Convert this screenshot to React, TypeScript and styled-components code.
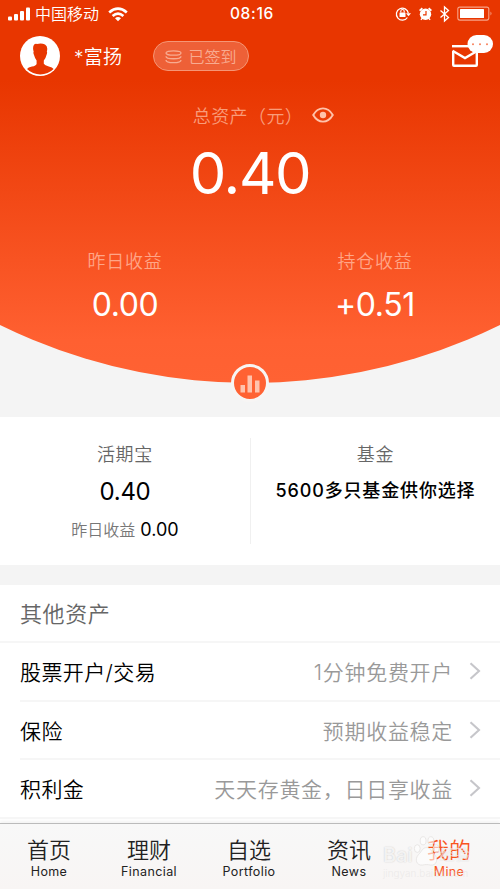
import React from "react";
import styled, { createGlobalStyle } from "styled-components";

const GlobalStyle = createGlobalStyle`
  * { box-sizing: border-box; }
  body {
    margin: 0;
    background: #f4f4f4;
    font-family: Inter, "Noto Sans CJK SC", sans-serif;
    font-weight: 350;
    overflow: hidden;
  }
`;

const Screen = styled.div`
  width: 500px;
  height: 889px;
  display: flex;
  flex-direction: column;
  background: #f4f4f4;
  overflow: hidden;
`;

const Hero = styled.header`
  position: relative;
  flex: none;
  height: 417px;
`;

const HeroBody = styled.div`
  height: 384px;
  color: #fff;
  background: linear-gradient(#e83600 0, #e83600 80px, #ff6031 340px, #ff6233 384px);
  clip-path: circle(568px at 50% -185px);
`;

const StatusBar = styled.div`
  height: 28px;
  display: grid;
  grid-template-columns: 1fr auto 1fr;
  align-items: center;
  padding: 0 7px 0 8px;
`;

const StatusGroup = styled.div<{ $end?: boolean }>`
  display: flex;
  align-items: center;
  justify-content: ${(p) => (p.$end ? "flex-end" : "flex-start")};
`;

const Carrier = styled.span`
  margin: 0 9px 0 5px;
  font-size: 16px;
  line-height: 20px;
`;

const Clock = styled.span`
  padding: 0 0 1px 3px;
  font-size: 15.5px;
  font-weight: 500;
  letter-spacing: 0.7px;
`;

const ProfileBar = styled.div`
  height: 56px;
  display: flex;
  align-items: center;
  padding: 0 7px 0 20px;
`;

const UserName = styled.span`
  width: 79px;
  margin-left: 14px;
  padding-top: 3px;
  font-size: 19px;
  line-height: 24px;
  letter-spacing: 0.2px;
`;

const SignedPill = styled.div`
  width: 96px;
  height: 30px;
  display: flex;
  align-items: center;
  justify-content: center;
  gap: 6px;
  padding-top: 1px;
  border: 1.5px solid #f59675;
  border-radius: 15px;
  background: #ee6037;
  color: #f8ab91;
  font-size: 16px;
  line-height: 20px;
`;

const MailIcon = styled.svg`
  margin: -10px 0 0 auto;
`;

const Total = styled.section`
  height: 150px;
  display: flex;
  flex-direction: column;
  align-items: center;
`;

const TotalLabel = styled.div`
  height: 24px;
  margin-top: 19px;
  display: flex;
  align-items: center;
  gap: 9px;
  padding-left: 27px;
  color: #f99c7a;
  font-size: 18px;
  letter-spacing: 0.4px;
`;

const TotalValue = styled.div`
  margin-top: 15px;
  font-size: 58px;
  font-weight: 400;
  line-height: 62px;
  letter-spacing: -1.3px;
`;

const Gains = styled.section`
  display: grid;
  grid-template-columns: 1fr 1fr;
`;

const Gain = styled.div`
  display: flex;
  flex-direction: column;
  align-items: center;
`;

const GainLabel = styled.div`
  margin-top: 16px;
  height: 24px;
  color: #ffa587;
  font-size: 18px;
  line-height: 24px;
  letter-spacing: 0.75px;
`;

const GainValue = styled.div`
  margin-top: 12px;
  font-size: 32px;
  font-weight: 400;
  line-height: 38px;
  letter-spacing: -0.4px;
`;

const ChartBadge = styled.div`
  position: absolute;
  left: 231px;
  top: 364px;
  width: 38px;
  height: 38px;
  display: grid;
  place-items: center;
  padding-top: 2px;
  border: 3px solid #f7f5f4;
  border-radius: 50%;
  background: #ff6233;
`;

const Products = styled.section`
  flex: none;
  height: 148px;
  display: grid;
  grid-template-columns: 1fr 1fr;
  align-items: center;
  background: #fff;
`;

const Product = styled.div<{ $divided?: boolean }>`
  height: 106px;
  display: flex;
  flex-direction: column;
  align-items: center;
  border-left: ${(p) => (p.$divided ? "1px solid #f0f0f0" : "0")};
`;

const ProductName = styled.div`
  margin-top: 5px;
  color: #666;
  font-size: 18px;
  line-height: 24px;
  letter-spacing: 0.75px;
`;

const ProductValue = styled.div`
  margin-top: 10px;
  color: #000;
  font-size: 24px;
  font-weight: 400;
  line-height: 30px;
  letter-spacing: -0.3px;
`;

const ProductSlogan = styled.div`
  margin-top: 12px;
  color: #000;
  font-size: 18px;
  font-weight: 500;
  line-height: 24px;
  letter-spacing: 0.85px;
`;

const ProductNote = styled.div`
  margin-top: 12px;
  color: #000;
  font-size: 18px;
  font-weight: 400;
  line-height: 22px;
`;

const NoteLabel = styled.span`
  margin-right: 5px;
  color: #777;
  font-size: 16px;
  font-weight: 350;
`;

const Assets = styled.section`
  flex: 1;
  margin-top: 20px;
  background: #fff;
`;

const AssetsTitle = styled.h2`
  margin: 0;
  height: 58px;
  padding-left: 20px;
  border-bottom: 2px solid #f6f6f6;
  color: #666;
  font-size: 22px;
  font-weight: 350;
  line-height: 59px;
  letter-spacing: 0.6px;
`;

const AssetRow = styled.div<{ $last?: boolean }>`
  height: 58.6px;
  margin-left: ${(p) => (p.$last ? "0" : "20px")};
  padding: 0 19px 0 ${(p) => (p.$last ? "20px" : "0")};
  display: flex;
  align-items: center;
  border-bottom: 2px solid #f6f6f6;
`;

const AssetName = styled.span`
  flex: 1;
  color: #000;
  font-size: 21px;
  letter-spacing: 0.4px;
`;

const AssetHint = styled.span`
  margin-right: 16px;
  color: #999;
  font-size: 21px;
  letter-spacing: 0.7px;
`;

const TabBar = styled.nav`
  position: relative;
  flex: none;
  height: 66px;
  display: grid;
  grid-template-columns: repeat(5, 1fr);
  border-top: 1px solid #bbb;
  background: linear-gradient(#f8f8f8, #f8f5f4);
  box-shadow: 0 -2px 3px rgba(0, 0, 0, 0.05);
`;

const Tab = styled.div<{ $active?: boolean }>`
  display: flex;
  flex-direction: column;
  align-items: center;
  padding-right: 2px;
  color: ${(p) => (p.$active ? "#f8551f" : "#222")};
`;

const TabTitle = styled.span`
  margin-top: 11px;
  font-size: 22px;
  line-height: 30px;
`;

const TabSub = styled.span`
  font-size: 12.5px;
  font-weight: 400;
  line-height: 14px;
  letter-spacing: 0.4px;
`;

const Watermark = styled.div`
  position: absolute;
  left: 383px;
  top: 11px;
  width: 92px;
`;

const WatermarkRow = styled.div`
  display: flex;
  align-items: flex-end;
  height: 32px;
  color: rgba(255, 255, 255, 0.75);
  text-shadow: 0 0 1.5px rgba(0, 0, 0, 0.2);
  font-size: 20px;
  font-weight: 500;
  line-height: 24px;
  white-space: nowrap;
`;

const WatermarkSuffix = styled.span`
  font-size: 15px;
  color: rgba(255, 255, 255, 0.6);
  text-shadow: 0 0 1px rgba(0, 0, 0, 0.12);
`;

const WatermarkUrl = styled.div`
  font-size: 10px;
  line-height: 13px;
  color: rgba(225, 222, 221, 0.5);
  white-space: nowrap;
`;

const Signal = () => (
  <svg width="22" height="14" viewBox="0 0 22 14" fill="#fff">
    <rect x="0" y="9.5" width="4" height="4" rx="1" />
    <rect x="6" y="7" width="4" height="6.5" rx="1" />
    <rect x="12" y="4" width="4" height="9.5" rx="1" />
    <rect x="18" y="0.5" width="4" height="13" rx="1" />
  </svg>
);

const Wifi = () => (
  <svg width="20" height="15" viewBox="0 0 20 15" fill="none" stroke="#fff" strokeWidth="2.7">
    <path d="M1.2 5.4Q10-2.2 18.8 5.4" />
    <path d="M4.6 9Q10 4.4 15.4 9" />
    <path d="M7 11.2Q10 8.8 13 11.2L10 14.3Z" fill="#fff" stroke="none" />
  </svg>
);

const StatusIcons = () => (
  <svg width="98" height="18" viewBox="0 0 98 18" fill="none" stroke="#fff">
    <path d="M12.4 12.5A6 6 0 1 1 13.3 8.2" strokeWidth="1.3" />
    <path d="M11 8.3h5l-2.5 3z" fill="#fff" stroke="none" />
    <rect x="4.5" y="7.4" width="6" height="4.6" rx=".6" fill="#fff" stroke="none" />
    <path d="M5.8 7.5V6.2a1.7 1.7 0 0 1 3.4 0v1.3" strokeWidth="1.1" />
    <circle cx="30.5" cy="9.3" r="5.7" fill="#fff" stroke="none" />
    <path d="M24.6 5.6l2.8-2.4M36.4 5.6l-2.8-2.4" strokeWidth="1.8" />
    <path d="M27 13.5l-1.1 1.3M34 13.5l1.1 1.3" strokeWidth="1.3" />
    <path d="M31 5.9v4h-3" stroke="#e83600" strokeWidth="1.2" />
    <path d="M45.5 5.4l8 7.2-4 3.4V2l4 3.4-8 7.2" strokeWidth="1.3" />
    <rect x="62.8" y="2.1" width="31" height="13" rx="2" stroke="#f7a287" strokeWidth="1.1" />
    <rect x="65" y="4.1" width="24" height="9" rx=".5" fill="#fff" stroke="none" />
    <path d="M95.5 6.5v4q2-2 0-4" fill="#f7a287" stroke="none" />
  </svg>
);

const Avatar = () => (
  <svg width="40" height="40" viewBox="0 0 40 40">
    <circle cx="20" cy="20" r="20" fill="#fff" />
    <path
      d="M14 8.8q1.2-1.5 3-.9 4.5-1.2 8 .5 3.3 2 1.8 7.4.8.7-.4 3.4-.8 3.5-2.6 5.3v3.2q1 1.8 5 2.8 3.6.8 4.8 2.5A18.7 18.7 0 0 1 7 33q1-1.8 5-2.5 4-.8 4.6-2.6v-3.4q-1.6-2-2.5-5.3-1.2-2.5-.4-3.4-1.4-4.5.3-7z"
      fill="#e83600"
    />
  </svg>
);

const Coins = () => (
  <svg width="17" height="14" viewBox="0 0 17 14" fill="none" stroke="#f8ab91" strokeWidth="1.3">
    <ellipse cx="8.5" cy="3" rx="7.5" ry="2.2" />
    <path d="M1 6.2c0 3.4 15 3.4 15 0M1 10c0 3.6 15 3.6 15 0" />
  </svg>
);

const Mail = () => (
  <MailIcon width="42" height="34" viewBox="0 0 42 34" fill="none" stroke="#fff" strokeWidth="2.4">
    <path d="M1 12.2H20" />
    <path d="M2.2 17V31Q2.2 31.8 3 31.8H25Q25.8 31.8 25.8 31V17" />
    <path d="M1.5 16.8L14 24L26.5 16.8" />
    <rect x="16.5" y="1" width="25.5" height="18" rx="9" fill="#fff" stroke="none" />
    <g fill="#f8805b" stroke="none">
      <circle cx="22" cy="10.3" r="1" />
      <circle cx="29" cy="10.3" r="1" />
      <circle cx="36" cy="10.3" r="1" />
    </g>
  </MailIcon>
);

const Eye = () => (
  <svg width="22" height="16" viewBox="0 0 22 16" fill="none" stroke="#ffc2aa" strokeWidth="1.9">
    <path d="M1.2 8Q5 1.4 11 1.4T20.8 8Q17 14.6 11 14.6T1.2 8Z" />
    <circle cx="11" cy="8" r="3.2" fill="#ffc2aa" stroke="none" />
  </svg>
);

const Bars = () => (
  <svg width="20" height="18" viewBox="0 0 20 18" fill="#ffc3ad">
    <rect x="0.5" y="10" width="4.5" height="7.5" />
    <rect x="7.5" y="0.5" width="4.5" height="17" />
    <rect x="15" y="5.5" width="4.5" height="12" />
  </svg>
);

const Chevron = () => (
  <svg width="12" height="18" viewBox="0 0 12 18" fill="none" stroke="#c6c6ca" strokeWidth="2.1">
    <path d="M1.5 1.2L10 9L1.5 16.8" />
  </svg>
);

const Paw = () => (
  <svg width="27" height="33" viewBox="0 0 27 34" fill="rgba(255,255,255,.6)" stroke="#e4e1e0" strokeWidth=".8">
    <ellipse cx="4" cy="15" rx="3" ry="4" />
    <ellipse cx="10" cy="7" rx="3" ry="4.2" />
    <ellipse cx="18" cy="7" rx="3" ry="4.2" />
    <ellipse cx="23.5" cy="15" rx="3" ry="4" />
    <path d="M13.5 14c4 0 5 4 8 7 5 5 2 12-4 11-3-.7-5-.7-8 0-6 1-9-6-4-11 3-3 4-7 8-7z" />
  </svg>
);

const assets = [
  { name: "股票开户/交易", hint: "1分钟免费开户" },
  { name: "保险", hint: "预期收益稳定" },
  { name: "积利金", hint: "天天存黄金，日日享收益" },
];

const tabs = [
  ["首页", "Home"],
  ["理财", "Financial"],
  ["自选", "Portfolio"],
  ["资讯", "News"],
  ["我的", "Mine"],
];

export default function App() {
  return (
    <Screen>
      <GlobalStyle />
      <Hero>
        <HeroBody>
          <StatusBar>
            <StatusGroup>
              <Signal />
              <Carrier>中国移动</Carrier>
              <Wifi />
            </StatusGroup>
            <Clock>08:16</Clock>
            <StatusGroup $end>
              <StatusIcons />
            </StatusGroup>
          </StatusBar>
          <ProfileBar>
            <Avatar />
            <UserName>*富扬</UserName>
            <SignedPill>
              <Coins />
              已签到
            </SignedPill>
            <Mail />
          </ProfileBar>
          <Total>
            <TotalLabel>
              总资产（元）
              <Eye />
            </TotalLabel>
            <TotalValue>0.40</TotalValue>
          </Total>
          <Gains>
            <Gain>
              <GainLabel>昨日收益</GainLabel>
              <GainValue>0.00</GainValue>
            </Gain>
            <Gain>
              <GainLabel>持仓收益</GainLabel>
              <GainValue>+0.51</GainValue>
            </Gain>
          </Gains>
        </HeroBody>
        <ChartBadge>
          <Bars />
        </ChartBadge>
      </Hero>
      <Products>
        <Product>
          <ProductName>活期宝</ProductName>
          <ProductValue>0.40</ProductValue>
          <ProductNote>
            <NoteLabel>昨日收益</NoteLabel>0.00
          </ProductNote>
        </Product>
        <Product $divided>
          <ProductName>基金</ProductName>
          <ProductSlogan>5600多只基金供你选择</ProductSlogan>
        </Product>
      </Products>
      <Assets>
        <AssetsTitle>其他资产</AssetsTitle>
        {assets.map((a, i) => (
          <AssetRow key={a.name} $last={i === assets.length - 1}>
            <AssetName>{a.name}</AssetName>
            <AssetHint>{a.hint}</AssetHint>
            <Chevron />
          </AssetRow>
        ))}
      </Assets>
      <TabBar>
        {tabs.map(([title, sub]) => (
          <Tab key={sub} $active={sub === "Mine"}>
            <TabTitle>{title}</TabTitle>
            <TabSub>{sub}</TabSub>
          </Tab>
        ))}
        <Watermark>
          <WatermarkRow>
            Bai
            <Paw />
            <WatermarkSuffix>经验</WatermarkSuffix>
          </WatermarkRow>
          <WatermarkUrl>jingyan.baidu.com</WatermarkUrl>
        </Watermark>
      </TabBar>
    </Screen>
  );
}
